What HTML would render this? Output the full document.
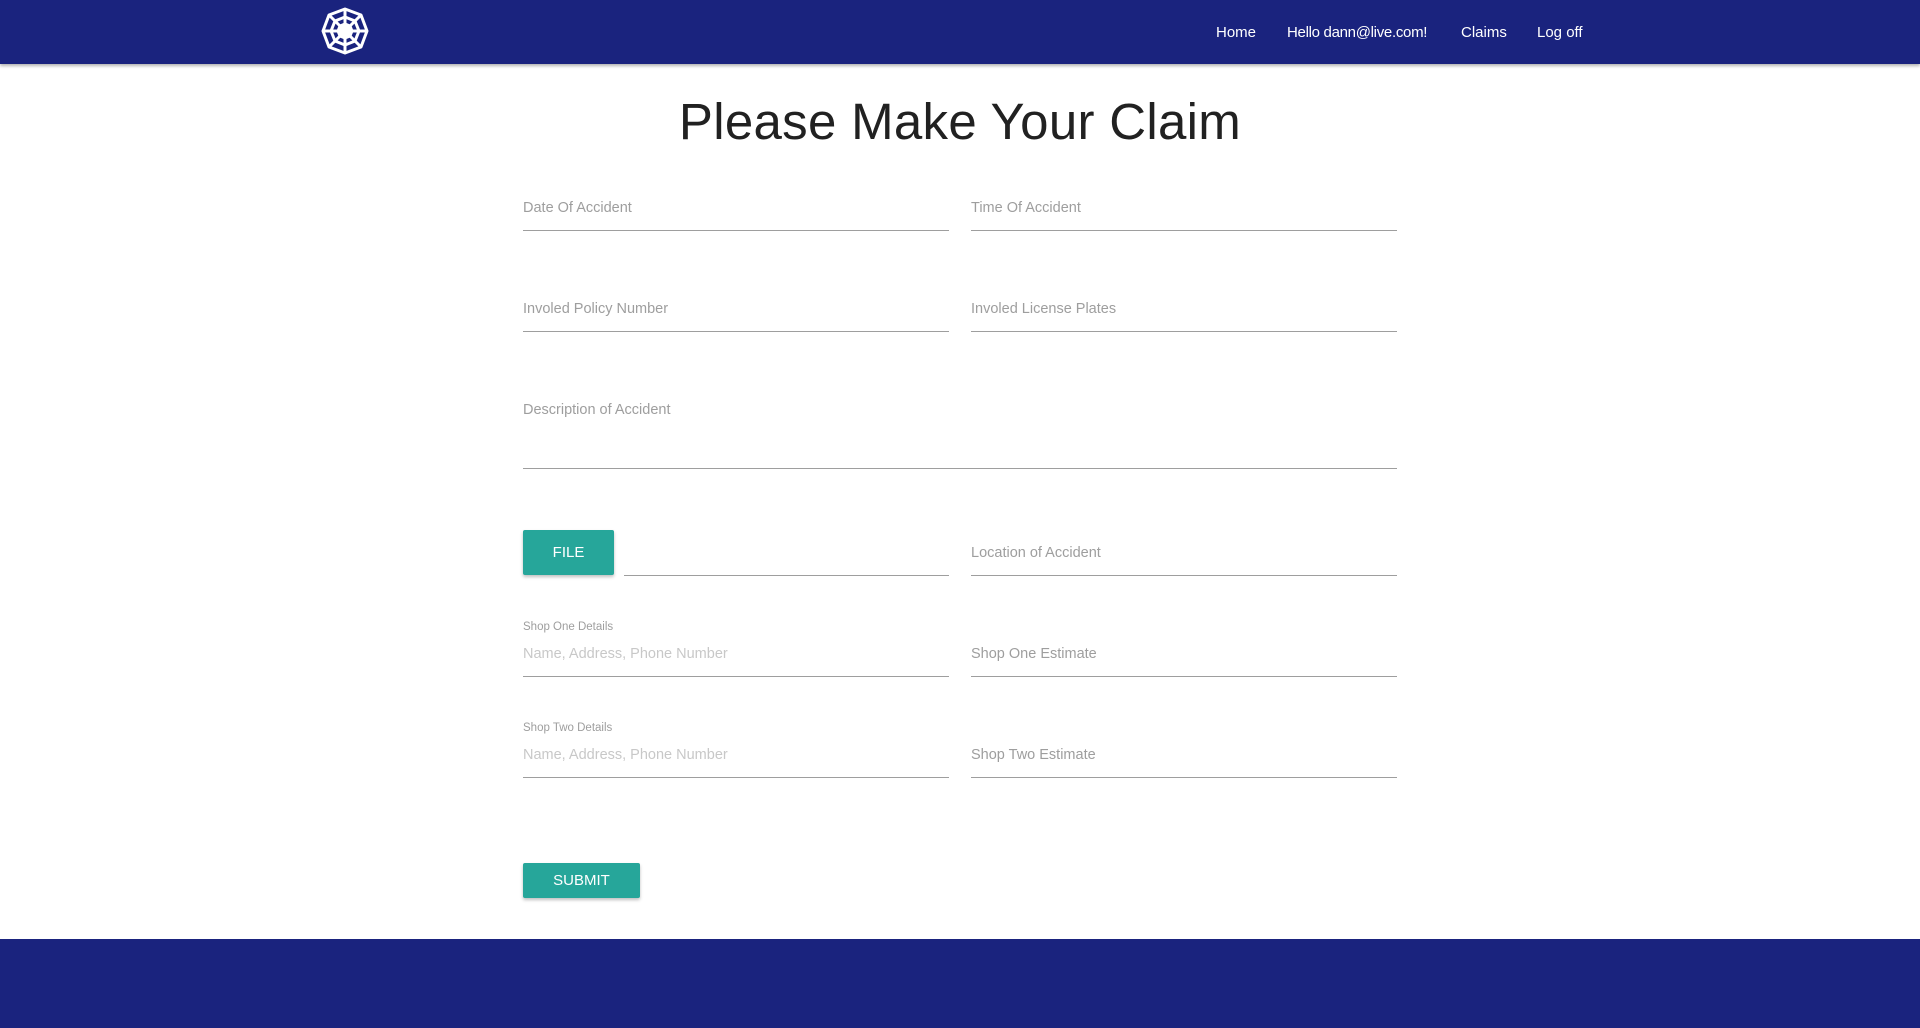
<!DOCTYPE html>
<html><head><meta charset="utf-8"><style>
*{margin:0;padding:0;box-sizing:border-box}
body{width:1920px;height:1028px;background:#fff;font-family:"Liberation Sans",sans-serif;position:relative;overflow:hidden}
.hdr{position:absolute;left:0;top:0;width:1920px;height:64px;background:#1a237e;box-shadow:0 2px 3px rgba(0,0,0,.3)}
.nav{position:absolute;top:24px;color:#fff;font-size:15px}
.ftr{position:absolute;left:0;top:939px;width:1920px;height:89px;background:#1a237e}
h1{position:absolute;left:0;width:1920px;top:92px;text-align:center;font-weight:normal;font-size:51px;color:#212121;letter-spacing:0.3px}
.lbl{position:absolute;color:#9e9e9e;font-size:14.5px}
.ph{position:absolute;color:#c8c8c8;font-size:14.5px}
.sm{position:absolute;color:#9e9e9e;font-size:11.5px}
.ln{position:absolute;height:1px;background:#9e9e9e}
.btn{position:absolute;background:#26a69a;color:#fff;font-size:15px;text-align:center;border-radius:2px;box-shadow:0 2px 3px rgba(0,0,0,.25)}
</style></head><body>
<div class="hdr">
<svg style="position:absolute;left:320px;top:6px" width="50" height="50" viewBox="0 0 50 50" fill="none" stroke="#fff" stroke-width="3" stroke-linejoin="round">
<polygon points="25,3 41,9 47,25 41,41 25,47 9,41 3,25 9,9"/>
<polygon points="25,11 35,15 39,25 35,35 25,39 15,35 11,25 15,15"/>
<polygon points="25,18 30,20 32,25 30,30 25,32 20,30 18,25 20,20"/>
<path d="M25 3V47M3 25H47M9 9L41 41M41 9L9 41"/>
<circle cx="25" cy="25" r="4" fill="#fff"/>
</svg>
<div class="nav" style="left:1216px">Home</div>
<div class="nav" style="left:1287px;letter-spacing:-0.3px">Hello dann@live.com!</div>
<div class="nav" style="left:1461px">Claims</div>
<div class="nav" style="left:1537px">Log off</div>
</div>
<h1>Please Make Your Claim</h1>

<div class="lbl" style="left:523px;top:200px">Date Of Accident</div>
<div class="ln" style="left:523px;top:230px;width:426px"></div>
<div class="lbl" style="left:971px;top:200px">Time Of Accident</div>
<div class="ln" style="left:971px;top:230px;width:426px"></div>

<div class="lbl" style="left:523px;top:301px">Involed Policy Number</div>
<div class="ln" style="left:523px;top:331px;width:426px"></div>
<div class="lbl" style="left:971px;top:301px">Involed License Plates</div>
<div class="ln" style="left:971px;top:331px;width:426px"></div>

<div class="lbl" style="left:523px;top:402px">Description of Accident</div>
<div class="ln" style="left:523px;top:468px;width:874px"></div>

<div class="btn" style="left:523px;top:530px;width:91px;height:45px;line-height:45px">FILE</div>
<div class="ln" style="left:624px;top:575px;width:325px"></div>
<div class="lbl" style="left:971px;top:545px">Location of Accident</div>
<div class="ln" style="left:971px;top:575px;width:426px"></div>

<div class="sm" style="left:523px;top:621px">Shop One Details</div>
<div class="ph" style="left:523px;top:646px">Name, Address, Phone Number</div>
<div class="ln" style="left:523px;top:676px;width:426px"></div>
<div class="lbl" style="left:971px;top:646px">Shop One Estimate</div>
<div class="ln" style="left:971px;top:676px;width:426px"></div>

<div class="sm" style="left:523px;top:722px">Shop Two Details</div>
<div class="ph" style="left:523px;top:747px">Name, Address, Phone Number</div>
<div class="ln" style="left:523px;top:777px;width:426px"></div>
<div class="lbl" style="left:971px;top:747px">Shop Two Estimate</div>
<div class="ln" style="left:971px;top:777px;width:426px"></div>

<div class="btn" style="left:523px;top:863px;width:117px;height:35px;line-height:35px">SUBMIT</div>
<div class="ftr"></div>
</body></html>
